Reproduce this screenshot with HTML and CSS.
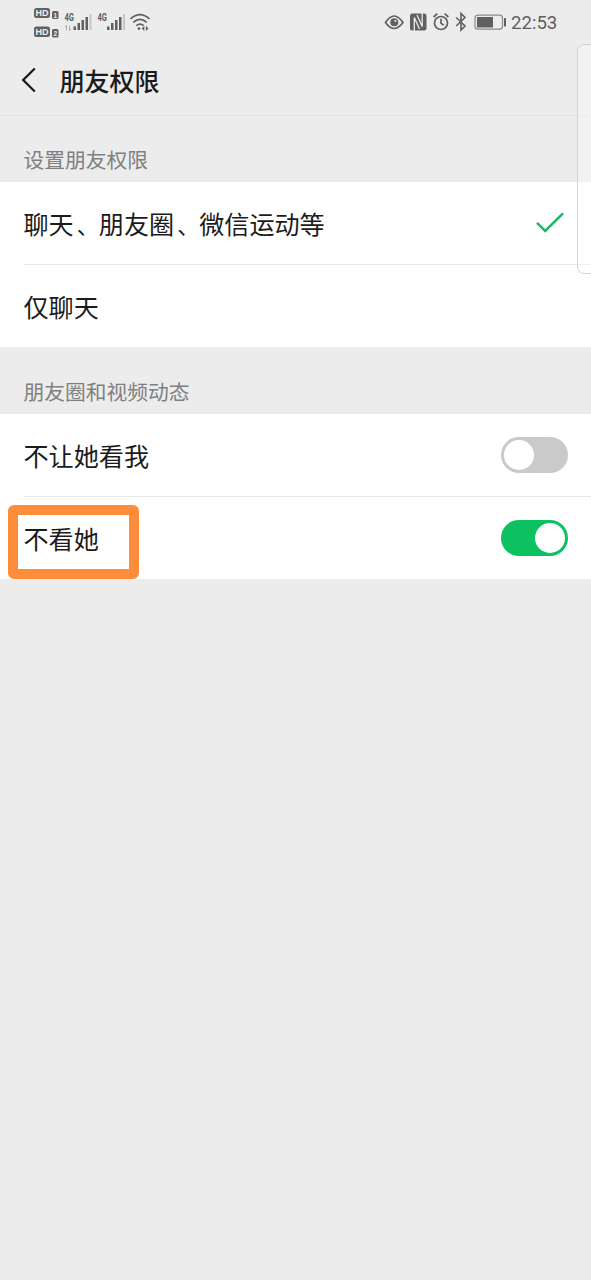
FILE: index.html
```
<!DOCTYPE html>
<html lang="zh-CN">
<head>
<meta charset="utf-8">
<title>朋友权限</title>
<link rel="stylesheet" href="styles.css">
</head>
<body>
<div class="screen">
  <div class="status">
    <svg class="status-left" width="130" height="44" viewBox="0 0 130 44">
      <g fill="#606060">
        <rect x="4" y="8" width="16" height="10" rx="2.5"/>
        <rect x="4" y="26.500" width="16" height="10.500" rx="2.500"/>
        <rect x="22" y="11" width="6.500" height="8" rx="1.500"/>
        <rect x="22" y="29" width="6.500" height="8.500" rx="1.500"/>
      </g>
      <g class="sim-text">
        <text x="5.400" y="16.300" textLength="13" lengthAdjust="spacingAndGlyphs">HD</text>
        <text x="5.400" y="35" textLength="13" lengthAdjust="spacingAndGlyphs">HD</text>
        <text class="sim-number" x="23.600" y="17.500">1</text>
        <text class="sim-number" x="23.400" y="35.800">2</text>
      </g>
      <g transform="translate(-5 0)">
        <g class="network-text">
          <text x="39.500" y="21" textLength="9.500" lengthAdjust="spacingAndGlyphs">4G</text>
          <text x="72.500" y="21" textLength="9.500" lengthAdjust="spacingAndGlyphs">4G</text>
        </g>
        <path d="M41.500 30.500V25.500l-1.300 1.500M44.500 25.500v5l1.300-1.500" fill="none" stroke="#b0b0b0"/>
        <g fill="#606060">
          <rect x="48.500" y="26.500" width="2.500" height="3.500"/><rect x="52.500" y="23" width="2.500" height="7"/><rect x="56.500" y="20" width="2.500" height="10"/><rect x="60.500" y="17" width="2.500" height="13"/>
          <rect x="82" y="26.500" width="2.500" height="3.500"/><rect x="86" y="23" width="2.500" height="7"/><rect x="90" y="20" width="2.500" height="10"/><rect x="94" y="17" width="2.500" height="13"/>
        </g>
        <path d="M65.500 14v16M99 14v16" stroke="#c6c6c6" stroke-width="2"/>
        <g fill="none" stroke="#606060" stroke-width="1.700">
          <path d="M105.500 18.800q9.500-8.500 19 0M108.300 22.400q6.700-6 13.400 0M111.300 25.600q3.700-3 7.400 0"/>
        </g>
        <path d="M116.700 28.400l2.600-2.600v5.200zM123.500 28.400l-2.600-2.600v5.200z" fill="#606060"/>
        <circle cx="114" cy="28.600" r="1.400" fill="#606060"/>
      </g>
    </svg>
    <svg class="status-right" width="126" height="44" viewBox="382 0 126 44">
      <g fill="none" stroke="#606060" stroke-width="1.700">
        <path d="M385.500 22.500q8.500-13 17.500 0q-9 12-17.500 0z"/>
        <circle cx="441" cy="23" r="6.500"/>
        <path d="M441 18.800v4.400l2.800 1.900M433.600 17l3.700-3.400M448.400 17l-3.700-3.400"/>
        <path d="M456.200 17.500l8.800 8.500-4 4V13.500l4 4-8.800 8.500" stroke-width="1.600"/>
        <rect x="475" y="15.200" width="27.500" height="14" rx="3" stroke="#888" stroke-width="1.200"/>
      </g>
      <circle cx="394.300" cy="22.200" r="4" fill="#606060"/>
      <circle cx="395.500" cy="20.800" r="1.100" fill="#ececec"/>
      <rect x="410" y="13.500" width="16.500" height="17" rx="2.200" fill="#606060"/>
      <path d="M414.300 31V17.500l5.200 11.500M422.200 13v13.500L417 15" fill="none" stroke="#ececec" stroke-width="1.300"/>
      <rect x="477" y="17" width="16" height="10.500" fill="#606060"/>
      <rect x="504" y="18" width="2" height="8.500" rx="0.500" fill="#606060"/>
    </svg>
    <span class="clock">22:53</span>
  </div>
  <header class="header">
    <svg class="back" width="16" height="28" viewBox="0 0 16 28"><path d="M13.800 2.500L2.200 14l11.600 11.500" fill="none" stroke="#1b1b1b" stroke-width="2.300"/></svg>
    <h1 class="title">朋友权限</h1>
  </header>
  <h2 class="label label-first">设置朋友权限</h2>
  <section class="group">
    <div class="row"><span>聊天<span class="comma">、</span>朋友圈<span class="comma">、</span>微信运动等</span>
      <svg class="check" width="30" height="22" viewBox="0 0 30 22"><path d="M2 10.800l8.200 8.200L28 1.300" fill="none" stroke="#20b56a" stroke-width="2.500"/></svg>
    </div>
    <div class="row"><span>仅聊天</span></div>
  </section>
  <h2 class="label">朋友圈和视频动态</h2>
  <section class="group">
    <div class="row"><span>不让她看我</span><span class="switch"></span></div>
    <div class="row row-marked"><span>不看她</span><span class="switch switch-on"></span></div>
  </section>
  <div class="edge-panel"></div>
</div>
</body>
</html>
```
FILE: styles.css
```
*, *::before, *::after { box-sizing: border-box; }
body { margin: 0; background: #ececec; }
.screen {
  position: relative;
  width: 591px;
  height: 1280px;
  overflow: hidden;
  background: #ececec;
  color: #1b1b1b;
  font-family: "Noto Sans CJK SC", sans-serif;
}
.status { display: flex; height: 44px; padding-left: 30px; }
.status-right { margin-left: 222px; }
.sim-text { fill: #f0f0f0; font: bold 9px "Liberation Sans", sans-serif; }
.sim-number { font-size: 6.500px; }
.network-text { fill: #606060; font: bold 10px Roboto, sans-serif; }
.clock {
  margin-left: 3px;
  color: #606060;
  font: 18.600px/46px Roboto, sans-serif;
}
.header {
  display: flex;
  align-items: center;
  height: 72px;
  padding-left: 21px;
  border-bottom: 1px solid #e2e2e2;
}
.title { margin: 1px 0 0 22.500px; font-size: 25px; font-weight: 500; line-height: 36px; }
.label {
  height: 67px;
  margin: 0;
  padding: 28px 23.500px 0;
  color: #808080;
  font-size: 20.750px;
  font-weight: 400;
  line-height: 32px;
}
.label-first { height: 66px; padding-top: 27px; }
.group { background: #fff; }
.row {
  position: relative;
  display: flex;
  align-items: center;
  justify-content: space-between;
  height: 82px;
  margin-left: 23.500px;
  padding-right: 23.500px;
  font-size: 25.100px;
  line-height: 36px;
}
.row:first-child { height: 83px; border-bottom: 1px solid #e8e8e8; }
.comma {
  display: inline-block;
  width: 25.100px;
  padding-left: 3.100px;
  font-size: 22px;
}
.check { margin-right: 3px; }
.switch {
  display: flex;
  width: 67px;
  height: 36px;
  padding: 3px;
  border-radius: 18px;
  background: #cacaca;
}
.switch::before {
  content: "";
  width: 30px;
  height: 30px;
  border-radius: 50%;
  background: #fff;
}
.switch-on { justify-content: flex-end; background: #0bc160; }
.row-marked::after {
  content: "";
  position: absolute;
  left: -16px;
  top: 8px;
  width: 131px;
  height: 74px;
  border: 10px solid #fd8c3b;
  border-radius: 6px;
}
.edge-panel {
  position: absolute;
  left: 577px;
  top: 44px;
  width: 20px;
  height: 230px;
  border: 1px solid #d2d2d2;
  border-radius: 7px;
  background: rgba(255, 255, 255, 0.35);
}
```
